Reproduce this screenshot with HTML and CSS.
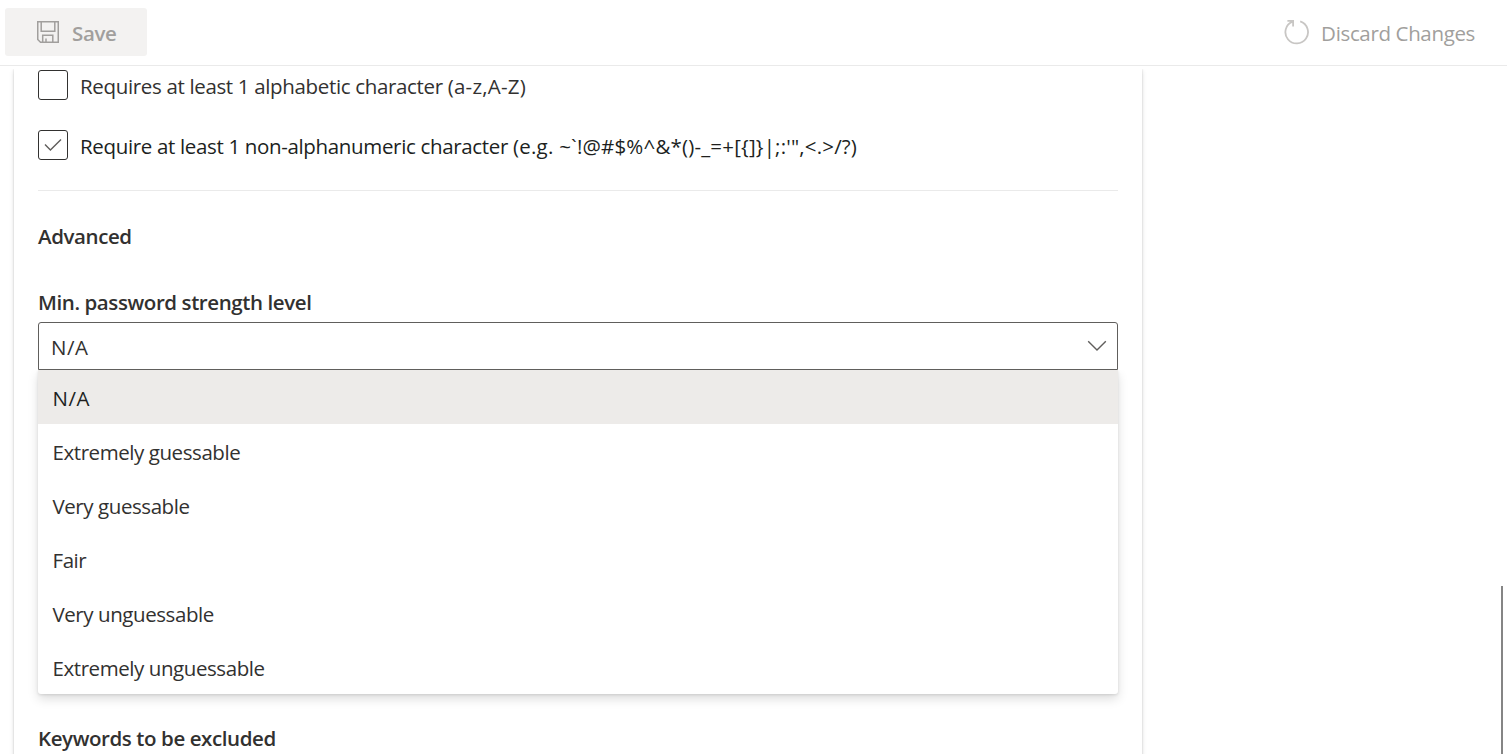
FILE: index.html
```html
<!DOCTYPE html>
<html lang="en">
<head>
<meta charset="utf-8">
<title>Password Policy</title>
<link rel="stylesheet" href="styles.css">
</head>
<body>
<div class="app">
  <header class="toolbar">
    <button class="command command-save" disabled>
      <svg class="icon-save" viewBox="0 0 22 22" width="22" height="22"><path d="M.75 .75H21.25V21.25H3.5L.75 18.5ZM4.2 1V10.3H17.8V1M5.7 21V14.3H15.8V21M9 21V17.6"/></svg>
      <span>Save</span>
    </button>
    <button class="command command-discard" disabled>
      <svg class="icon-reset" viewBox="0 0 26 26" width="26" height="26"><path d="M16.2 2.4A11.3 11.3 0 1 1 8.4 2.7M3.4 1.9H9.1V7.4"/></svg>
      <span>Discard Changes</span>
    </button>
  </header>
  <main class="content">
    <section class="card">
      <label class="check-row"><span class="box"></span><span class="t-check">Requires at least 1 alphabetic character <span class="t-range">(a-z,A-Z)</span></span></label>
      <label class="check-row checked"><span class="box"><svg viewBox="0 0 18 14" width="18" height="14"><path d="M1 6.6L6.4 12L17 1.4"/></svg></span><span class="t-check">Require at least 1 non-alphanumeric character <span class="t-range">(e.g. </span><span class="t-symbols">~`!@#$%^&amp;*()-_=+[{]}|;:'",&lt;.&gt;/?)</span></span></label>
      <hr class="divider">
      <h2 class="heading">Advanced</h2>
      <h3 class="label">Min. password strength level</h3>
      <div class="dropdown">
        <span class="t-value">N/A</span>
        <svg viewBox="0 0 20 12" width="20" height="12"><path d="M1.2 1.2L10 10L18.8 1.2"/></svg>
      </div>
      <ul class="options">
        <li class="option selected"><span class="t-value">N/A</span></li>
        <li class="option">Extremely guessable</li>
        <li class="option">Very guessable</li>
        <li class="option">Fair</li>
        <li class="option">Very unguessable</li>
        <li class="option">Extremely unguessable</li>
      </ul>
      <h3 class="label keywords">Keywords to be excluded</h3>
    </section>
    <div class="scrollbar"></div>
  </main>
</div>
</body>
</html>
```
FILE: styles.css
```css
* { box-sizing: border-box; }
body {
  margin: 0;
  background: #fff;
  color: #323130;
  font: 20.5px/30px "Open Sans", "Noto Sans", sans-serif;
  white-space: nowrap;
  overflow: hidden;
}
svg { display: block; fill: none; stroke: currentColor; flex: none; }
.app { display: flex; flex-direction: column; height: 754px; }
.toolbar {
  display: flex;
  justify-content: space-between;
  height: 66px;
  padding: 8px 32px 9px 5px;
  border-bottom: 1px solid #eaeaea;
}
.command {
  display: flex;
  align-items: center;
  border: 0;
  background: none;
  color: #a19f9d;
  font: inherit;
  padding: 0;
}
.command-save { width: 142px; padding: 1px 0 0 32px; gap: 13px; background: #f3f2f1; border-radius: 3px; font-weight: 600; letter-spacing: -.35px; }
.command-discard { padding-top: 1px; gap: 11px; letter-spacing: -.35px; }
.icon-save { stroke-width: 1.5; margin-top: -1px; }
.icon-reset { stroke: #c8c6c4; stroke-width: 1.8; margin-top: -2px; }
.content { display: flex; justify-content: space-between; flex: 1; margin-top: 3px; overflow: hidden; min-height: 0; }
.card {
  width: 1128px;
  height: 800px;
  margin-left: 14px;
  padding: 1px 24px 0;
  box-shadow: 0 2px 5px rgba(0,0,0,.13), 0 0 2px rgba(0,0,0,.15);
}
.check-row { display: flex; align-items: center; gap: 12px; height: 30px; margin-bottom: 30px; }
.t-check { padding-top: 2px; letter-spacing: -.34px; }
.t-range { letter-spacing: .23px; }
.t-symbols { letter-spacing: .18px; }
.checked { color: #201f1e; }
.box { display: flex; align-items: center; justify-content: center; width: 30px; height: 30px; border: 1px solid #323130; border-radius: 3px; }
.box svg { stroke: #605e5c; stroke-width: 1.4; }
.divider { height: 1px; border: 0; background: #eaeaea; margin: 0; }
.heading, .label { font: 600 20.5px/30px "Open Sans", "Noto Sans", sans-serif; letter-spacing: -.41px; margin: 0; }
.heading { margin-top: 30px; }
.label { margin-top: 36px; }
.dropdown {
  display: flex;
  align-items: center;
  justify-content: space-between;
  height: 48px;
  margin-top: 5px;
  padding: 1px 10px 0 12px;
  border: 1px solid #605e5c;
  border-radius: 3px 3px 0 0;
}
.dropdown svg { stroke: #605e5c; stroke-width: 1.4; margin-top: -2px; }
.t-value { letter-spacing: .5px; }
.options {
  list-style: none;
  margin: 0;
  padding: 0;
  background: #fff;
  border-radius: 0 0 3px 3px;
  box-shadow: 0 5px 11px rgba(0,0,0,.132), 0 1px 3px rgba(0,0,0,.108);
  clip-path: inset(0 -30px -30px);
  letter-spacing: -.43px;
}
.option { display: flex; align-items: center; height: 54px; padding: 1px 14.5px 0; }
.selected { background: #edebe9; color: #201f1e; }
.keywords { margin-top: 29px; }
.scrollbar { width: 2px; margin: 517px 4px 0 0; background: #858585; }
```
